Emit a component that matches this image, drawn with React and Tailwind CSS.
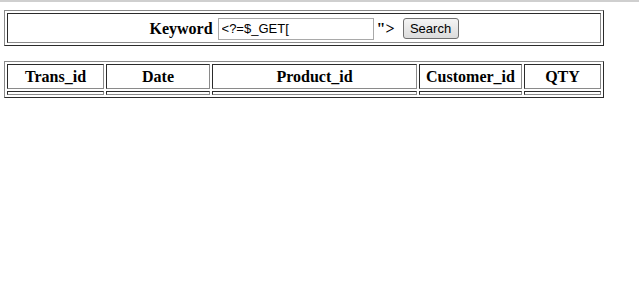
const outerCls =
  "border-separate border-spacing-[2px] border border-t-[#8a8a8a] border-l-[#8a8a8a] border-r-[#2b2b2b] border-b-[#2b2b2b]";

const cellCls =
  "border border-t-[#2b2b2b] border-l-[#2b2b2b] border-r-[#8a8a8a] border-b-[#8a8a8a] p-px";

const columns = [
  { label: "Trans_id", w: "w-[97px]" },
  { label: "Date", w: "w-[104px]" },
  { label: "Product_id", w: "w-[205px]" },
  { label: "Customer_id", w: "w-[103px]" },
  { label: "QTY", w: "w-[77px]" },
];

const App = () => {
  return (
    <div className="min-h-[292px] bg-white text-black font-['Liberation_Serif',serif] text-base leading-[21px]">
      <div className="h-[2px] bg-[#cfcfcf]" />

      <div className="pl-[4px] pt-[8px]">
        {/* Search form */}
        <table className={outerCls + " w-[600px]"}>
          <tbody>
            <tr>
              <th className={cellCls + " h-[30px] text-center font-bold"}>
                <span className="inline-flex items-center align-middle">
                  <span>Keyword</span>
                  <input
                    defaultValue="<?=$_GET["
                    className="ml-[5px] w-[156px] h-[22px] px-[3px] border border-[#a9a9a9] bg-white text-[13px] font-normal font-['Liberation_Sans',Arial,sans-serif] outline-none"
                  />
                  <span className="ml-[3px]">"&gt;</span>
                  <button className="ml-[8px] w-[56px] h-[21px] rounded-[3px] border border-[#707070] bg-linear-to-b from-[#f4f4f4] to-[#dcdcdc] text-[13px] font-normal font-['Liberation_Sans',Arial,sans-serif] leading-none">
                    Search
                  </button>
                </span>
              </th>
            </tr>
          </tbody>
        </table>

        {/* Transactions */}
        <table className={outerCls + " w-[600px] mt-[15px]"}>
          <thead>
            <tr>
              {columns.map((c) => (
                <th
                  key={c.label}
                  className={cellCls + " " + c.w + " text-center font-bold"}
                >
                  {c.label}
                </th>
              ))}
            </tr>
          </thead>
          <tbody>
            <tr>
              {columns.map((c) => (
                <td key={c.label} className={cellCls + " h-[4px] leading-none"} />
              ))}
            </tr>
          </tbody>
        </table>
      </div>
    </div>
  );
};

export default App;
